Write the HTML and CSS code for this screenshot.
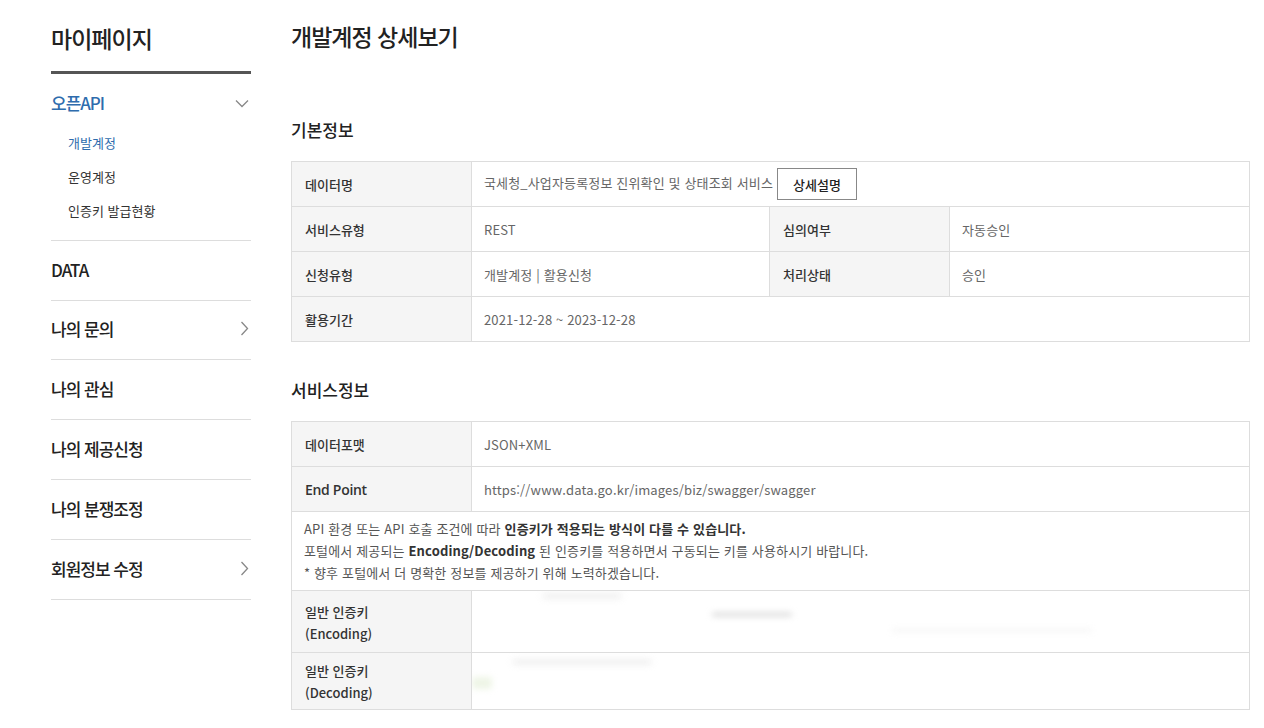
FILE: index.html
```html
<!DOCTYPE html>
<html lang="ko">
<head>
  <meta charset="UTF-8">
  <title>마이페이지 - 개발계정 상세보기</title>
  <link rel="stylesheet" href="styles.css">
</head>
<body>
<div class="wrap">
  <aside class="side">
    <h2 class="side-title">마이페이지</h2>
    <ul class="menu">
      <li class="menu-item open">
        <a href="#" class="menu-link active">오픈API
          <svg class="chev" width="14" height="9" viewBox="0 0 14 9"><path d="M1 1.5l6 6 6-6" fill="none" stroke="#888" stroke-width="1.3"/></svg>
        </a>
        <ul class="sub">
          <li><a href="#" class="on">개발계정</a></li>
          <li><a href="#">운영계정</a></li>
          <li><a href="#">인증키 발급현황</a></li>
        </ul>
      </li>
      <li class="menu-item"><a href="#" class="menu-link">DATA</a></li>
      <li class="menu-item"><a href="#" class="menu-link">나의 문의
        <svg class="chev" width="9" height="15" viewBox="0 0 9 15"><path d="M1.5 1l6 6.5-6 6.5" fill="none" stroke="#888" stroke-width="1.3"/></svg>
      </a></li>
      <li class="menu-item"><a href="#" class="menu-link">나의 관심</a></li>
      <li class="menu-item"><a href="#" class="menu-link">나의 제공신청</a></li>
      <li class="menu-item"><a href="#" class="menu-link">나의 분쟁조정</a></li>
      <li class="menu-item"><a href="#" class="menu-link">회원정보 수정
        <svg class="chev" width="9" height="15" viewBox="0 0 9 15"><path d="M1.5 1l6 6.5-6 6.5" fill="none" stroke="#888" stroke-width="1.3"/></svg>
      </a></li>
    </ul>
  </aside>

  <main class="content">
    <h1 class="page-title">개발계정 상세보기</h1>

    <h3 class="sec-title first">기본정보</h3>
    <table class="info">
      <colgroup><col class="c-label"><col class="c-val"><col class="c-label"><col></colgroup>
      <tr>
        <th>데이터명</th>
        <td colspan="3">국세청_사업자등록정보 진위확인 및 상태조회 서비스<button class="btn-detail">상세설명</button></td>
      </tr>
      <tr>
        <th>서비스유형</th><td>REST</td>
        <th>심의여부</th><td>자동승인</td>
      </tr>
      <tr>
        <th>신청유형</th><td>개발계정 | 활용신청</td>
        <th>처리상태</th><td>승인</td>
      </tr>
      <tr>
        <th>활용기간</th><td colspan="3">2021-12-28 ~ 2023-12-28</td>
      </tr>
    </table>

    <h3 class="sec-title">서비스정보</h3>
    <table class="info">
      <colgroup><col class="c-label"><col></colgroup>
      <tr><th>데이터포맷</th><td>JSON+XML</td></tr>
      <tr><th class="en">End Point</th><td>https://www.data.go.kr/images/biz/swagger/swagger</td></tr>
      <tr>
        <td colspan="2" class="notice">
          API 환경 또는 API 호출 조건에 따라 <b>인증키가 적용되는 방식이 다를 수 있습니다.</b><br>
          포털에서 제공되는 <b>Encoding/Decoding</b> 된 인증키를 적용하면서 구동되는 키를 사용하시기 바랍니다.<br>
          * 향후 포털에서 더 명확한 정보를 제공하기 위해 노력하겠습니다.
        </td>
      </tr>
      <tr class="key-row">
        <th>일반 인증키<br><span class="en">(Encoding)</span></th>
        <td class="key"><span class="smudge s1"></span><span class="smudge s2"></span><span class="smudge s3"></span></td>
      </tr>
      <tr class="key-row">
        <th>일반 인증키<br><span class="en">(Decoding)</span></th>
        <td class="key"><span class="smudge s4"></span><span class="smudge s5"></span></td>
      </tr>
    </table>
  </main>
</div>
</body>
</html>
```

FILE: styles.css
```css
:root{
  --text:#222;
  --sub:#666;
  --blue:#2e6cad;
  --line:#ddd;
  --th-bg:#f5f5f5;
}
*{box-sizing:border-box;margin:0;padding:0}
body{font-family:"Noto Sans CJK KR","Noto Sans",sans-serif;color:var(--text);background:#fff}
a{text-decoration:none;color:inherit}
ul{list-style:none}

.wrap{display:flex;gap:40px;padding-left:51px;width:1250px}

/* side menu */
.side{width:200px;flex:none}
.side-title{font-size:23px;font-weight:500;line-height:34px;padding-top:21px;padding-bottom:16px;border-bottom:3px solid #555;letter-spacing:-1px}
.menu-item{border-bottom:1px solid var(--line)}
.menu-link{display:flex;align-items:center;justify-content:space-between;height:59px;padding-bottom:3px;font-size:17px;font-weight:500;letter-spacing:-1px}
.menu-item:nth-child(3) .menu-link{height:58px}
.menu-link.active{color:var(--blue)}
.open .menu-link{height:57px;padding-bottom:0}
.open .chev{margin-top:2px;margin-right:0}
.menu-link .chev{margin-right:2px}
.sub{margin-top:-5px;padding:0 0 12px 17px}
.sub li a{display:block;line-height:34px;font-size:13px;color:#333}
.sub li a.on{color:var(--blue)}

/* content */
.content{flex:1;width:959px}
.page-title{font-size:23px;font-weight:500;line-height:34px;padding-top:19px;letter-spacing:-1px}
.sec-title{font-size:17px;font-weight:500;line-height:24px;margin:36px 0 19px}
.sec-title.first{margin-top:65px}

.info{width:100%;border-collapse:collapse;table-layout:fixed;font-size:13px;border:1px solid var(--line)}
.info col.c-label{width:180px}
.info col.c-val{width:298px}
.info th,.info td{border:1px solid var(--line);height:45px;text-align:left;vertical-align:middle}
.info th{background:var(--th-bg);font-weight:500;color:#333;padding:0 13px}
.info td{color:var(--sub);padding:0 12px;white-space:nowrap;overflow:hidden;letter-spacing:.15px}
.info th.en{font-family:"Open Sans","Noto Sans CJK KR",sans-serif;font-size:14px;font-weight:600;letter-spacing:-.3px}

.btn-detail{font:inherit;font-weight:500;font-size:13px;color:#222;background:#fff;border:1px solid #888;width:80px;height:32px;margin-left:4px;vertical-align:middle;letter-spacing:0}

.notice{line-height:22px;padding:6px 12px 6px !important;color:#555 !important;white-space:normal !important}
.notice b{color:#333;font-weight:700}

.key-row th{height:62px;line-height:22px;padding-top:2px}
.key-row:last-child th{height:57px}
.key-row th .en{font-size:13px}
.key{position:relative}
.smudge{position:absolute;height:6px;border-radius:3px;background:#e6e6e6;filter:blur(3px)}
.s1{left:70px;top:2px;width:80px;opacity:.6}
.s2{left:240px;top:22px;width:80px;height:3px;background:#ccc}
.s3{left:420px;top:38px;width:200px;height:3px;opacity:.5}
.s4{left:40px;top:6px;width:140px;opacity:.6}
.s5{left:0;top:24px;width:20px;height:12px;background:#eef5e6}
```
